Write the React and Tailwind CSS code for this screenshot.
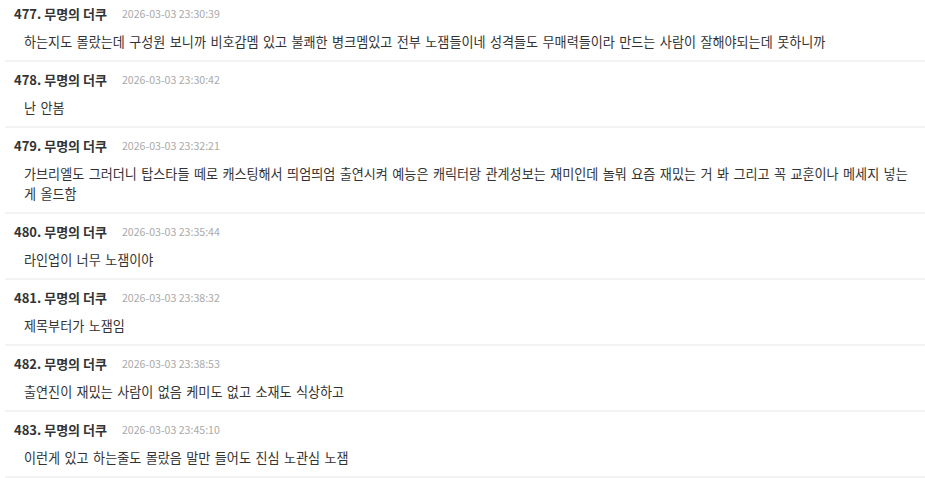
import React from "react";

const comments = [
  {
    no: 477,
    date: "2026-03-03 23:30:39",
    text: "하는지도 몰랐는데 구성원 보니까 비호감멤 있고 불쾌한 병크멤있고 전부 노잼들이네 성격들도 무매력들이라 만드는 사람이 잘해야되는데 못하니까",
  },
  { no: 478, date: "2026-03-03 23:30:42", text: "난 안봄" },
  {
    no: 479,
    date: "2026-03-03 23:32:21",
    text: "가브리엘도 그러더니 탑스타들 떼로 캐스팅해서 띄엄띄엄 출연시켜 예능은 캐릭터랑 관계성보는 재미인데 놀뭐 요즘 재밌는 거 봐 그리고 꼭 교훈이나 메세지 넣는 게 올드함",
  },
  { no: 480, date: "2026-03-03 23:35:44", text: "라인업이 너무 노잼이야" },
  { no: 481, date: "2026-03-03 23:38:32", text: "제목부터가 노잼임" },
  {
    no: 482,
    date: "2026-03-03 23:38:53",
    text: "출연진이 재밌는 사람이 없음 케미도 없고 소재도 식상하고",
  },
  {
    no: 483,
    date: "2026-03-03 23:45:10",
    text: "이런게 있고 하는줄도 몰랐음 말만 들어도 진심 노관심 노잼",
  },
];

const Comment = ({ c }) => (
  <div className="border-b-2 border-[#f3f3f3] pt-[8px] pb-[8px]">
    <div className="flex items-center h-5 pl-[9px]">
      <span className="text-[13px] font-bold text-[#333]">{c.no}. 무명의 더쿠</span>
      <span className="ml-[15px] text-[10.6px] text-[#aaa]">{c.date}</span>
    </div>
    <p className="mt-[8px] pl-[19px] pr-[4px] text-[13.1px] leading-5 text-[#333] [word-spacing:1.5px]">
      {c.text}
    </p>
  </div>
);

export default function App() {
  return (
    <div
      className="w-[925px] h-[478px] overflow-hidden bg-white"
      style={{ fontFamily: '"Noto Sans CJK KR", "Noto Sans", sans-serif' }}
    >
      <div className="ml-[5px] -mt-[4px]">
        {comments.map((c) => (
          <Comment key={c.no} c={c} />
        ))}
      </div>
    </div>
  );
}
